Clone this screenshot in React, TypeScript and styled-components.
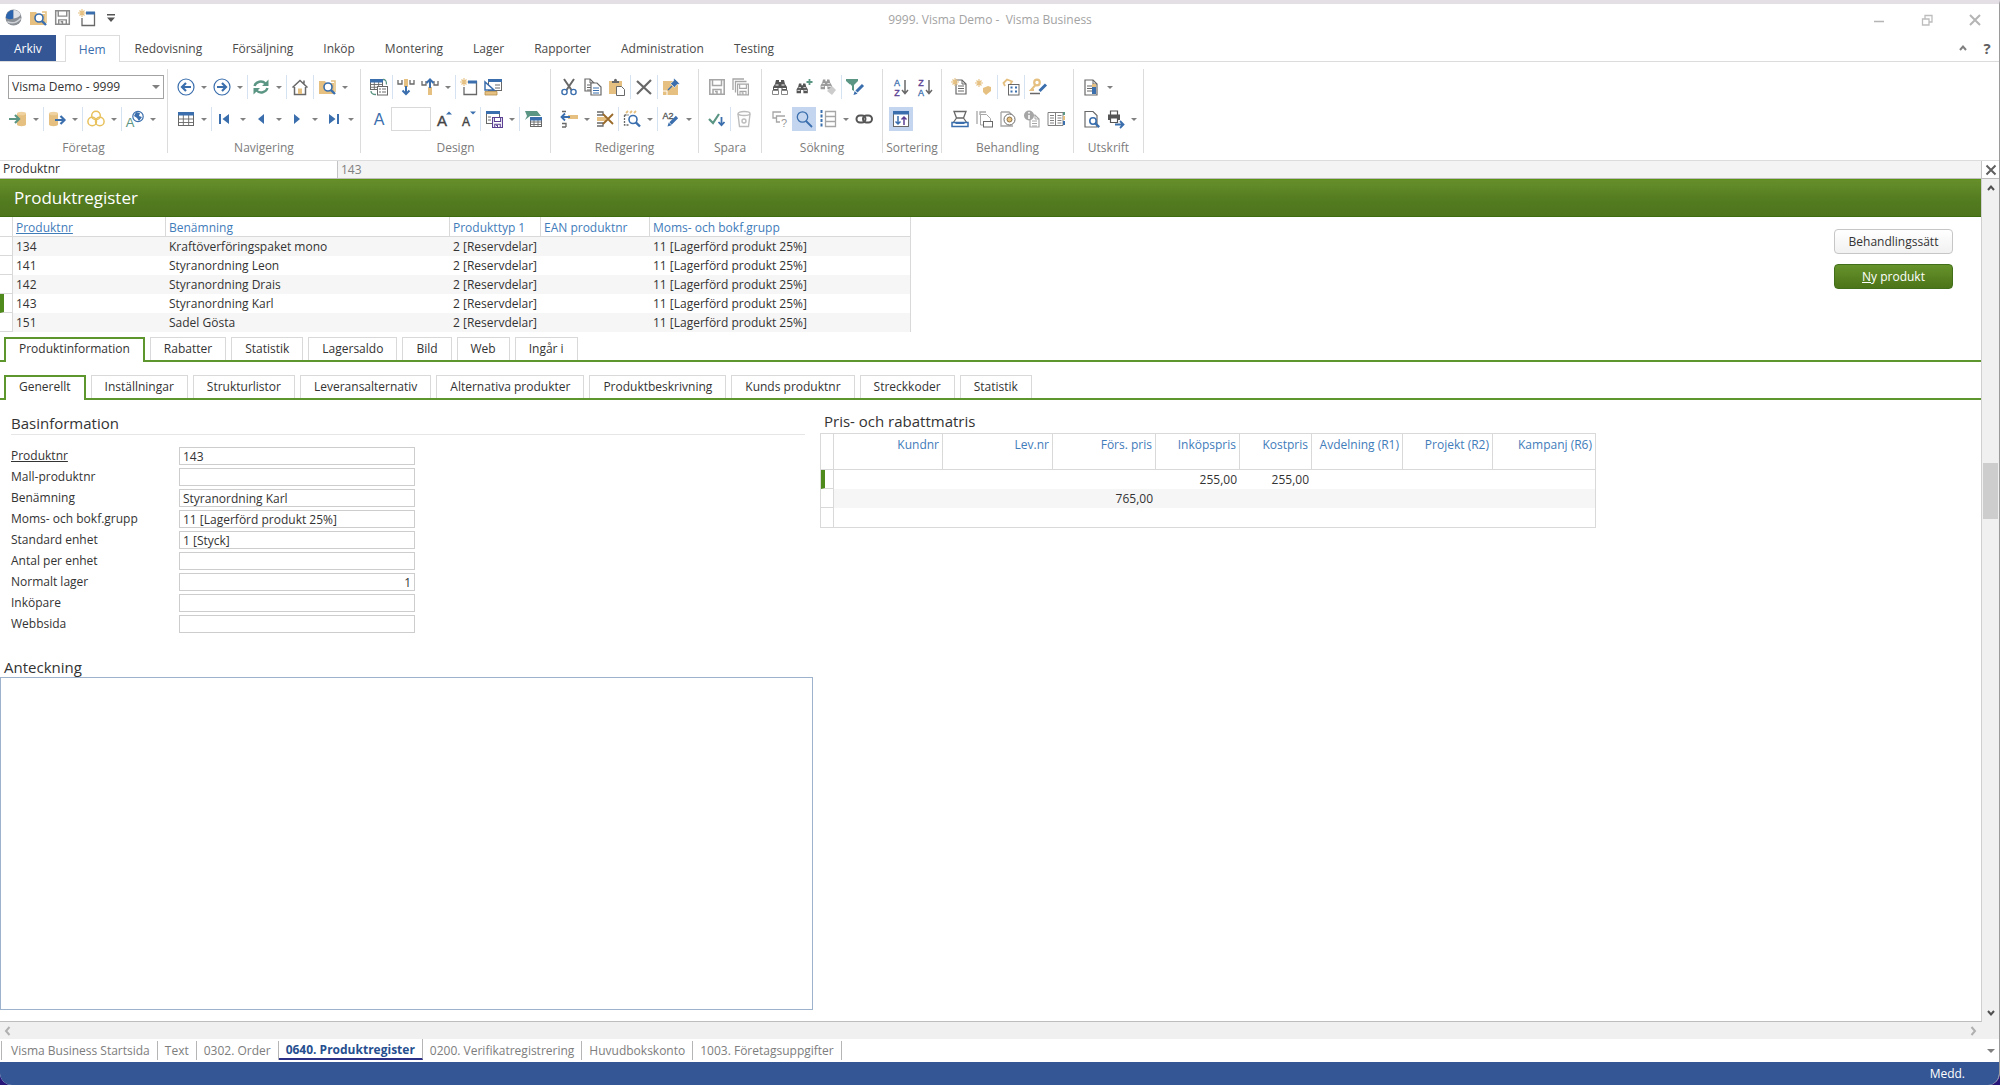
import React from "react";
import styled, { createGlobalStyle, css } from "styled-components";

const c = {
  blue: "#3a6ead",
  navy: "#345695",
  green: "#5b9583",
  tan: "#e5c080",
  gold: "#e8c15c",
  gray: "#686868",
  light: "#a6a6a6",
  purple: "#5a3f92",
  leaf: "#4f8a1c",
  line: "#d9d9d9",
};

const GlobalStyle = createGlobalStyle`
  *, *::before, *::after { box-sizing: border-box; }
  body { margin: 0; background: #27157a; }
  body, button, input, select, textarea, table {
    font-family: "Open Sans", "Noto Sans", sans-serif;
    font-size: 12px;
    line-height: 16px;
    color: #333;
  }
  button { margin: 0; padding: 0; border: 0; background: none; cursor: pointer; }
`;

/* ---------- icons ---------- */

const S = (p: React.SVGProps<SVGPathElement>) => <path fill="none" strokeWidth={1.3} {...p} />;
const Lens = ({ x = 10, y = 9, r = 4, fill = "#fff" }) => (
  <>
    <circle cx={x} cy={y} r={r} fill={fill} stroke={c.blue} strokeWidth={1.6} />
    <path d={`M${x + r * 0.7} ${y + r * 0.7}L${x + r + 3} ${y + r + 3}`} stroke={c.blue} strokeWidth={2.4} />
  </>
);
const Floppy = ({ x = 1, y = 1, s = 16, col = c.light, bg = "#fff" }) => (
  <g transform={`translate(${x} ${y}) scale(${s / 16})`}>
    <path d="M.8.8h14.4v14.4H.8z" fill={bg} stroke={col} strokeWidth={1.6} />
    <path d="M3.5 1v5.5h9V1M4 15v-4.5h8V15M6 12.5h2V15" fill="none" stroke={col} strokeWidth={1.5} />
  </g>
);
const Star = ({ x = 4, y = 4 }) => (
  <path
    d={`M${x - 4} ${y}h8M${x} ${y - 4}v8M${x - 2.5} ${y - 2.5}l5 5M${x + 2.5} ${y - 2.5}l-5 5`}
    stroke={c.tan}
    strokeWidth={1.1}
  />
);
const Page = ({ x = 3, y = 1, w = 11, h = 14, col = c.gray }) => (
  <>
    <path d={`M${x} ${y}h${w - 4}l4 4v${h - 4}H${x}z`} fill="#fff" stroke={col} strokeWidth={1.2} />
    <path d={`M${x + w - 4} ${y}v4h4`} fill="none" stroke={col} strokeWidth={1} />
    <path d={`M${x + 2} ${y + 6}h${w - 4}M${x + 2} ${y + 8.5}h${w - 4}M${x + 2} ${y + 11}h${w - 4}`} stroke={col} strokeWidth={1} />
  </>
);
const Binoculars = ({ col = "#555" }) => (
  <>
    <path d="M5 2h3v2h2V2h3l1 4 2 3v5H10.5V10h-3v4H2V9l2-3z" fill={col} />
    <path d="M4.5 7h3M10.5 7h3M3 10.5h3.5M11.5 10.5H15" stroke="#fff" strokeWidth={1} />
  </>
);
const Pencil = () => (
  <>
    <path d="M8.5 13.5L15 7" stroke={c.blue} strokeWidth={3.2} />
    <path d="M5.5 16.5l1.2-4 2.8 2.8z" fill={c.blue} />
  </>
);
const Cyl = ({ x = 7 }) => (
  <>
    <path d={`M${x} 3.5v11c0 2.3 9 2.3 9 0v-11z`} fill={c.tan} />
    <ellipse cx={x + 4.5} cy={3.5} rx={4.5} ry={1.8} fill="#efd29f" />
  </>
);
const Grid = ({ x = 1, y = 2, w = 16, h = 14 }) => (
  <>
    <rect x={x + 0.5} y={y + 0.5} width={w - 1} height={h - 1} fill="#fff" stroke={c.gray} />
    <path
      d={`M${x + w / 3} ${y}v${h}M${x + (w * 2) / 3} ${y}v${h}M${x} ${y + h * 0.5}h${w}M${x} ${y + h * 0.75}h${w}`}
      stroke={c.gray}
      strokeWidth={0.9}
    />
    <rect x={x} y={y} width={w} height={3.5} fill={c.blue} />
  </>
);
const Glyph = styled.text`
  font-family: "Liberation Sans", sans-serif;
  text-anchor: middle;
`;

const icons = {
  globe: (
    <>
      <circle cx="9" cy="9" r="8.5" fill="#8b8f96" />
      <path d="M1 9a8 8 0 0 1 8-8v9c-4 1.500-7 .5-8-1z" fill="#2c63ad" />
      <path d="M9 1c3.500 0 6.500 2 7.500 5-1 2-4 3.500-7.500 4z" fill="#dfe3e8" />
      <path d="M2.500 13.500c4.500 2 10 1 14-3.500" stroke="#d0d3d8" strokeWidth="1.500" fill="none" />
    </>
  ),
  folderSearch: (
    <>
      <path d="M1 3h6l1.500 2H16v11H1z" fill={c.tan} />
      <path d="M13 3h4v11" fill="none" stroke={c.tan} strokeWidth="1.500" />
      <Lens x={10} y={9} />
    </>
  ),
  save: <Floppy />,
  saveDark: <Floppy col="#8a8a8a" />,
  saveAll: (
    <>
      <S d="M1 12V1h11M3.500 14.500V3.500h11" stroke={c.light} />
      <Floppy x={5} y={5.5} s={12} />
    </>
  ),
  newWin: (
    <>
      <path d="M4 9v7.500h12.500V4H9" fill="none" stroke={c.gray} strokeWidth="1.300" />
      <path d="M8 2.500h9v3H8z" fill={c.blue} />
      <Star />
    </>
  ),
  back: (
    <>
      <circle cx="9" cy="9" r="8" fill="none" stroke={c.blue} strokeWidth="1.200" />
      <S d="M14 9H5M9 5L5 9l4 4" stroke={c.blue} strokeWidth={2.2} />
    </>
  ),
  forward: (
    <>
      <circle cx="9" cy="9" r="8" fill="none" stroke={c.blue} strokeWidth="1.200" />
      <S d="M4 9h9M9 5l4 4-4 4" stroke={c.blue} strokeWidth={2.2} />
    </>
  ),
  refresh: (
    <>
      <S d="M2.500 8A6.500 6 0 0 1 13.500 5.500M15.500 10A6.500 6 0 0 1 4.500 12.500" stroke={c.green} strokeWidth={2.4} />
      <path d="M16.500 1.500v6.500H10zM1.500 16.500V10H8z" fill={c.green} />
    </>
  ),
  home: (
    <>
      <S d="M1.500 9.500L9 2.500l7.500 7M3.500 9v7.500h11V9M13 5.500V2.500" stroke={c.gray} strokeWidth={1.5} />
      <rect x="7" y="10.500" width="4" height="5.500" fill={c.tan} />
    </>
  ),
  dbIn: (
    <>
      <Cyl x={8} />
      <S d="M0 9h9M6 5l4 4-4 4" stroke={c.green} strokeWidth={2.2} />
    </>
  ),
  dbOut: (
    <>
      <Cyl x={1} />
      <S d="M7 10h9M12.500 6l4 4-4 4" stroke={c.blue} strokeWidth={2.2} />
    </>
  ),
  rings: (
    <g fill="none" stroke={c.gold} strokeWidth="1.500">
      <circle cx="9" cy="5.500" r="4.300" />
      <circle cx="5.200" cy="11.500" r="4.300" />
      <circle cx="12.800" cy="11.500" r="4.300" />
    </g>
  ),
  globeA: (
    <>
      <circle cx="12" cy="6.500" r="5.200" fill="#fff" stroke={c.blue} strokeWidth="1.200" />
      <path d="M10 2l4 1-1 3 3 1-3 4-2-3-3-2z" fill={c.blue} />
      <Glyph x="4" y="17" fontSize="13" fill={c.green}>A</Glyph>
    </>
  ),
  table: <Grid />,
  first: <path d="M3 4h2v10H3zM13 4v10L6.500 9z" fill={c.blue} />,
  prev: <path d="M12 4v10L6 9z" fill={c.blue} />,
  next: <path d="M6 4v10l6-5z" fill={c.blue} />,
  last: <path d="M13 4h2v10h-2zM5 4v10l6.500-5z" fill={c.blue} />,
  tableSwap: (
    <>
      <Grid x={0} y={1} w={13} h={11} />
      <rect x="7.500" y="8.500" width="10" height="8.500" fill="#fff" stroke={c.gray} />
      <path d="M9 11h2M12 11h4M9 14h2M12 14h4" stroke={c.gray} />
      <S d="M13 1.500c3 0 3.500 1.500 3.500 5M1 13c0 3 2 3.500 5 3.500" stroke={c.green} />
    </>
  ),
  moveDown: (
    <>
      <S d="M1 2v4h4V2M13 2v4h4V2" stroke={c.gray} />
      <path d="M7 1h4v8H7z" fill={c.tan} />
      <S d="M9 8v8M5.500 12.500L9 16l3.500-3.500" stroke={c.blue} strokeWidth={2} />
    </>
  ),
  moveUp: (
    <>
      <S d="M1 3v4h4V3M13 3v4h4V3" stroke={c.gray} />
      <path d="M7 9h4v8H7z" fill={c.tan} />
      <S d="M9 10V2M5.500 5L9 1.500 12.500 5" stroke={c.blue} strokeWidth={2} />
    </>
  ),
  designWin: (
    <>
      <rect x="4.500" y="1.500" width="13" height="11" fill="#fff" stroke={c.gray} />
      <path d="M4 1h14v3H4z" fill={c.blue} />
      <path d="M11 7h5M11 10h5" stroke={c.gray} />
      <path d="M1 4v8h9z" fill="#fff" stroke={c.blue} strokeWidth="1.500" />
      <path d="M1 13.500h12V17H1z" fill={c.tan} stroke="#b58f4d" strokeWidth=".8" />
    </>
  ),
  fontA: <Glyph x="9" y="15" fontSize="16" fill={c.blue}>A</Glyph>,
  fontUp: (
    <>
      <Glyph x="8" y="16" fontSize="15" fill="#444" stroke="#444" strokeWidth=".4">A</Glyph>
      <path d="M12 4.500L15 1.500l3 3z" fill={c.blue} />
    </>
  ),
  fontDown: (
    <>
      <Glyph x="8" y="16" fontSize="12" fill="#444" stroke="#444" strokeWidth=".4">A</Glyph>
      <path d="M12 1.500l3 3 3-3z" fill={c.blue} />
    </>
  ),
  saveLayout: (
    <>
      <rect x="1.500" y="1.500" width="13" height="12" fill="#fff" stroke={c.gray} />
      <path d="M1 1h14v3H1z" fill={c.blue} />
      <path d="M3 7h3M3 10h3" stroke={c.gray} />
      <Floppy x={7} y={7} s={11} col={c.purple} />
    </>
  ),
  flagTable: (
    <>
      <path d="M1 1h12l4 5H6L1 10l2-4z" fill={c.green} />
      <Grid x={6} y={7} w={12} h={10} />
    </>
  ),
  cut: (
    <>
      <S d="M4 1l7.500 11M14 1L6.500 12" stroke={c.gray} strokeWidth={2} />
      <circle cx="4.500" cy="14" r="2.600" fill="none" stroke={c.blue} strokeWidth="1.400" />
      <circle cx="13.500" cy="14" r="2.600" fill="none" stroke={c.blue} strokeWidth="1.400" />
    </>
  ),
  copy: (
    <>
      <Page x={1} y={1} w={9} h={12} />
      <path d="M7 5h6l4 4v8H7z" fill="#fff" stroke={c.gray} strokeWidth="1.200" />
      <path d="M9 10h6M9 12.500h6M9 15h6" stroke={c.blue} />
    </>
  ),
  paste: (
    <>
      <path d="M1 3h13v13H1z" fill={c.tan} />
      <path d="M4 5V3h2c0-3 3-3 3 0h2v2z" fill={c.gray} />
      <path d="M8.500 8.500h5l3 3v6h-8z" fill="#fff" stroke={c.gray} />
    </>
  ),
  del: <S d="M2 3l14 13M16 2L2 16" stroke={c.gray} strokeWidth={2.2} />,
  pin: (
    <>
      <path d="M1 3h15v14H1z" fill={c.tan} />
      <path d="M5 17v-4H1" fill="none" stroke="#fff" />
      <path d="M12 0l6 6-3 .5-2.500 3-4-4 3-2.500z" fill={c.blue} stroke="#fff" strokeWidth=".6" />
      <S d="M10 8l-4 4" stroke={c.blue} />
    </>
  ),
  insertRow: (
    <>
      <path d="M8 5h10v4H8z" fill={c.tan} />
      <S d="M10 7H2M5 3.500L1.500 7 5 10.500" stroke={c.blue} strokeWidth={1.8} />
      <S d="M2 1.500h4M2 13.500h4v3.500M2 17h4" stroke={c.gray} />
    </>
  ),
  deleteRow: (
    <>
      <S d="M1 2h6v3H1M1 13h6v3H1" stroke={c.gray} />
      <path d="M1 7h9v4H1z" fill={c.tan} />
      <S d="M7 4l10 10M17 4L7 14" stroke="#9a6a2a" strokeWidth={1.8} />
    </>
  ),
  replace: (
    <>
      <S d="M3 3l2-2M7 3l2-2M11 3l2-2" stroke={c.tan} strokeWidth={1.8} />
      <S d="M1.500 5h4M1.500 5v10h4" stroke={c.gray} strokeDasharray="2 1" />
      <Lens x={10} y={9.5} r={4} />
    </>
  ),
  editText: (
    <>
      <Glyph x="6" y="9" fontSize="9" fill="#555" stroke="#555" strokeWidth=".3">A2</Glyph>
      <Pencil />
    </>
  ),
  confirm: (
    <>
      <S d="M1 9l4 4 6-9" stroke={c.green} strokeWidth={2.2} />
      <S d="M13.500 7v8M10.500 12l3 3.200 3-3.200" stroke={c.blue} strokeWidth={1.8} />
    </>
  ),
  trash: (
    <g fill="none" stroke="#bcbcbc" strokeWidth="1.400">
      <ellipse cx="9" cy="3.500" rx="6" ry="2" />
      <path d="M3 4l1.500 12.500h9L15 4" />
      <circle cx="9" cy="11" r="2" />
    </g>
  ),
  find: (
    <>
      <Binoculars />
      <path d="M1.500 12.500h6v4h-6zM10.500 12.500h6v4h-6z" fill="#fff" stroke="#888" />
    </>
  ),
  findAdd: (
    <>
      <g transform="translate(0 4) scale(.8)">
        <Binoculars />
      </g>
      <S d="M14.500 1v6M11.500 4h6" stroke={c.green} strokeWidth={1.8} />
    </>
  ),
  findClear: (
    <>
      <g transform="scale(.8)">
        <Binoculars col="#999" />
      </g>
      <path d="M8 13l5-5 4 4-4 5z" fill="#ccc" />
    </>
  ),
  filterEdit: (
    <>
      <path d="M0 1h12v2L8 7v6l-3.500-2V7L0 3z" fill={c.green} />
      <path d="M4 6l2 2v5l-2-1z" fill="#fff" />
      <path d="M10.500 13.500L17 7" stroke={c.blue} strokeWidth="3" />
      <path d="M7.500 17l1.200-4 2.800 2.800z" fill={c.blue} />
    </>
  ),
  unknown: (
    <>
      <S d="M10 2H2v6h3M14 6H5.500v6H9" stroke={c.light} />
      <Glyph x="13" y="17" fontSize="11" fill="#999">?</Glyph>
    </>
  ),
  search: (
    <>
      <circle cx="7.500" cy="7" r="5.200" fill="none" stroke={c.blue} strokeWidth="1.300" />
      <S d="M11 11l6 6" stroke={c.blue} strokeWidth={1.8} />
    </>
  ),
  numList: (
    <>
      <S d="M2.500 0v18" stroke={c.blue} strokeWidth={2} strokeDasharray="3 1.500" />
      <S d="M6.500 1.500h10v15h-10zM6.500 6.500h10M6.500 11.500h10" stroke={c.light} />
    </>
  ),
  link: (
    <g fill="none" stroke="#555" strokeWidth="2">
      <rect x="1.500" y="5.500" width="9" height="7" rx="3.500" />
      <rect x="8" y="5.500" width="9" height="7" rx="3.500" />
    </g>
  ),
  sortAz: (
    <>
      <Glyph x="5" y="7.500" fontSize="9" fill={c.blue} stroke={c.blue} strokeWidth=".3">A</Glyph>
      <Glyph x="5" y="18" fontSize="9" fill={c.purple} stroke={c.purple} strokeWidth=".3">Z</Glyph>
      <S d="M13 2v13M10 12l3 3.500 3-3.500" stroke={c.gray} strokeWidth={1.5} />
    </>
  ),
  sortZa: (
    <>
      <Glyph x="5" y="7.500" fontSize="9" fill={c.purple} stroke={c.purple} strokeWidth=".3">Z</Glyph>
      <Glyph x="5" y="18" fontSize="9" fill={c.blue} stroke={c.blue} strokeWidth=".3">A</Glyph>
      <S d="M13 2v13M10 12l3 3.500 3-3.500" stroke={c.gray} strokeWidth={1.5} />
    </>
  ),
  sortPanel: (
    <>
      <rect x="1.500" y="1.500" width="15" height="15" fill="#fff" stroke={c.gray} />
      <path d="M1 1h16v3.500H1z" fill={c.blue} />
      <S d="M6 6v8M3.500 11.500L6 14l2.500-2.500" stroke={c.blue} strokeWidth={1.5} />
      <S d="M12 15V7M9.500 9.500L12 7l2.500 2.500" stroke={c.purple} strokeWidth={1.5} />
    </>
  ),
  newDoc: (
    <>
      <Page x={5} y={2} w={10} h={14} />
      <Star x={4} y={4} />
    </>
  ),
  newTag: (
    <>
      <Star x={4} y={5} />
      <path d="M8 10l5-2 3 1v4l-5 4-3-3z" fill={c.tan} />
    </>
  ),
  tagList: (
    <>
      <S d="M3 8L1.500 5 5 1.500l5 2-3 5" stroke={c.tan} strokeWidth={1.8} />
      <rect x="6.500" y="6.500" width="10.500" height="10.500" fill="#fff" stroke={c.gray} />
      <path d="M8.500 9.500h2M13 9.500h2M8.500 13.500h2M13 13.500h2" stroke={c.blue} strokeWidth="2" />
    </>
  ),
  keyEdit: (
    <>
      <circle cx="8" cy="4.500" r="2.800" fill="none" stroke={c.tan} strokeWidth="2.200" />
      <S d="M6.500 7L2 12h3" stroke={c.tan} strokeWidth={2} />
      <path d="M10.500 13l6.500-6.500" stroke={c.blue} strokeWidth="3" />
      <path d="M1 15.500h10" stroke={c.gray} strokeWidth="1.500" />
    </>
  ),
  scan: (
    <>
      <S d="M3 1.500h12l-2.500 6.500h-7zM5.500 8L2 13M12.500 8l3.500 5" stroke={c.gray} />
      <path d="M1 12.500h16v4H1z" fill="#fff" stroke={c.blue} strokeWidth="1.500" />
      <path d="M4.500 12.500h9v1.500h-9z" fill={c.blue} />
    </>
  ),
  docMail: (
    <>
      <S d="M2 1v13M5 5V2h6" stroke={c.light} />
      <path d="M5.500 4.500h6l4 4V12M5.500 4.500V15H8" fill="none" stroke={c.light} />
      <rect x="8.500" y="11.500" width="9" height="5.500" fill="#fff" stroke={c.gray} />
    </>
  ),
  docView: (
    <>
      <path d="M2 2h8l3 3M2 2v14h12" fill="none" stroke={c.light} strokeWidth="1.300" />
      <circle cx="10.500" cy="9.500" r="5.500" fill="#fff" stroke={c.gray} />
      <circle cx="10.500" cy="9.500" r="2.500" fill={c.tan} stroke="#8f7447" />
    </>
  ),
  docInfo: (
    <>
      <Page x={7} y={5} w={9} h={12} col={c.light} />
      <circle cx="6" cy="5.500" r="5" fill={c.light} />
      <path d="M6 2v1.500M6 5v4" stroke="#fff" strokeWidth="1.600" />
    </>
  ),
  ledger: (
    <>
      <S
        d="M1 2.500h15v13H1zM8.500 2.500v13M3 5.500h4M3 8h4M3 10.500h4M3 13h4M10.500 5.500h4M10.500 8h4M10.500 10.500h4M10.500 13h4"
        stroke="#808080"
        strokeWidth={1}
      />
      <path d="M16 2h2v3h-2z" fill={c.green} />
      <path d="M16 6h2v4h-2z" fill={c.tan} />
      <path d="M16 11h2v4h-2z" fill={c.blue} />
    </>
  ),
  report: (
    <>
      <Page x={2} y={2} w={12} h={15} />
      <path d="M9 8h4v8H9z" fill={c.blue} />
      <path d="M9 6h4v3H9z" fill={c.tan} />
    </>
  ),
  preview: (
    <>
      <path d="M2 1.500h8l4 4V17H2z" fill="#fff" stroke={c.gray} strokeWidth="1.200" />
      <Lens x={10} y={11} r={3.2} />
    </>
  ),
  print: (
    <>
      <path d="M1 4.500h12V10H1z" fill="#555" />
      <path d="M3.500 1h7v4h-7zM3.500 8h7v4.500h-7z" fill="#fff" stroke="#555" strokeWidth="1.200" />
      <S d="M8 14.500h8M13 11l3.500 3.500L13 18" stroke={c.blue} strokeWidth={1.8} />
    </>
  ),
};
type IconName = keyof typeof icons;

const Svg = styled.svg<{ $size: number }>`
  display: block;
  flex: none;
  width: ${(p) => p.$size}px;
  height: ${(p) => p.$size}px;
  overflow: visible;
`;
const Icon = ({ name, size = 18 }: { name: IconName; size?: number }) => (
  <Svg viewBox="0 0 18 18" $size={size} aria-hidden="true">
    {icons[name]}
  </Svg>
);

type Dir = "up" | "down" | "left" | "right";
const chevrons: Record<Dir, string> = {
  up: "M2 7l3-3.500L8 7",
  down: "M2 3l3 3.500L8 3",
  left: "M6.500 1L3 5l3.500 4",
  right: "M3.500 1L7 5 3.500 9",
};
const Chevron = ({ dir, color = "#505050" }: { dir: Dir; color?: string }) => (
  <Svg viewBox="0 0 10 10" $size={10} aria-hidden="true">
    <path d={chevrons[dir]} fill="none" stroke={color} strokeWidth="2" />
  </Svg>
);
const Triangle = styled.span<{ $size?: number }>`
  border: ${(p) => p.$size ?? 3}px solid transparent;
  border-top-color: #808080;
  border-bottom-width: 0;
`;

/* ---------- window frame ---------- */

const Window = styled.div`
  display: flex;
  flex-direction: column;
  min-height: 100vh;
  overflow: hidden;
  background: #fff;
  border-top: 4px solid #e4dfe5;
  border-right: 1px solid #9a9a9a;
  border-radius: 0 0 12px 12px;
`;
const TitleBar = styled.header`
  display: grid;
  grid-template-columns: 1fr auto 1fr;
  align-items: center;
  height: 31px;
  padding: 0 12px 0 5px;
`;
const QuickAccess = styled.div`
  display: flex;
  align-items: center;
  gap: 7px;
  padding-bottom: 4px;
`;
const AppTitle = styled.h1`
  margin: 0;
  padding-right: 12px;
  font-size: 12px;
  font-weight: 400;
  color: #a3a3a3;
`;
const WindowButtons = styled.div`
  display: flex;
  justify-content: flex-end;
  gap: 24px;
`;
const SmallButton = styled.button`
  display: flex;
  align-items: center;
  justify-content: center;
  min-width: 16px;
  height: 18px;
`;
const WindowButton = styled(SmallButton)`
  width: 24px;
`;

/* ---------- ribbon ---------- */

const RibbonTabs = styled.nav`
  display: flex;
  align-items: flex-end;
  height: 27px;
  border-bottom: 1px solid #dcdcdc;
`;
const RibbonTab = styled.button<{ $kind?: "file" | "active" }>`
  height: 26px;
  padding: 2px 15px 0;
  color: #4a4a4a;
  ${(p) =>
    p.$kind === "file" &&
    css`
      margin-right: 9px;
      padding: 2px 14px 0;
      background: ${c.navy};
      color: #fff;
    `}
  ${(p) =>
    p.$kind === "active" &&
    css`
      height: 27px;
      margin-bottom: -1px;
      padding: 1px 13px 0;
      border: 1px solid #dcdcdc;
      border-bottom: 0;
      background: #fff;
      color: ${c.blue};
    `}
`;
const RibbonTools = styled.div`
  display: flex;
  align-self: center;
  gap: 8px;
  margin-left: auto;
  padding-right: 4px;
`;
const HelpMark = styled.span`
  font-size: 15px;
  font-weight: 700;
  color: #606060;
`;
const Ribbon = styled.div`
  display: flex;
  padding: 7px 0;
  border-bottom: 1px solid #dcdcdc;
`;
const Group = styled.section<{ $width: number }>`
  display: flex;
  flex-direction: column;
  gap: 8px;
  flex: none;
  width: ${(p) => p.$width}px;
  height: 84px;
  padding: 6px 0 0 6px;
  border-right: 1px solid #dcdcdc;
`;
const ToolRow = styled.div`
  display: flex;
  align-items: center;
  height: 24px;
`;
const GroupLabel = styled.h2`
  margin: 0 0 0 -6px;
  padding-top: 1px;
  font-size: 12px;
  font-weight: 400;
  line-height: 16px;
  text-align: center;
  color: #7c7c7c;
  white-space: nowrap;
`;
const ToolButton = styled.button<{ $on?: boolean }>`
  display: flex;
  align-items: center;
  justify-content: center;
  flex: none;
  width: 24px;
  height: 24px;
  background: ${(p) => (p.$on ? "#c4d6ef" : "none")};
`;
const CaretButton = styled.button`
  display: flex;
  align-items: center;
  justify-content: center;
  flex: none;
  width: 12px;
  height: 24px;
`;
const Divider = styled.span`
  flex: none;
  width: 1px;
  height: 24px;
  margin: 0 1px;
  background: #d5e2f1;
`;
const Picker = styled.div`
  position: relative;
  width: 156px;
  margin-left: 2px;
  & > span {
    position: absolute;
    top: 10px;
    right: 4px;
    pointer-events: none;
  }
`;
const CompanySelect = styled.select`
  appearance: none;
  display: block;
  width: 100%;
  height: 24px;
  padding: 0 16px 0 3px;
  border: 1px solid #a3a3a3;
  border-radius: 0;
  background: #fff;
`;
const FontBox = styled.input`
  width: 40px;
  height: 24px;
  border: 1px solid ${c.line};
`;

const Tool = ({ icon, label, menu, on }: { icon: IconName; label: string; menu?: boolean; on?: boolean }) => (
  <>
    <ToolButton aria-label={label} aria-pressed={on} $on={on}>
      <Icon name={icon} />
    </ToolButton>
    {menu && (
      <CaretButton aria-label={`${label}, meny`}>
        <Triangle />
      </CaretButton>
    )}
  </>
);

/* ---------- work area ---------- */

const FilterBar = styled.div`
  display: flex;
  height: 18px;
  border-bottom: 1px solid #bdbdbd;
  background: #f4f4f4;
`;
const FilterLabel = styled.label`
  width: 338px;
  padding-left: 3px;
  border-right: 1px solid #c4c4c4;
  background: #fff;
`;
const FilterInput = styled.input`
  flex: 1;
  min-width: 0;
  padding: 0 3px;
  border: 0;
  background: none;
  color: #808080;
`;
const FilterClose = styled(SmallButton)`
  width: 18px;
  height: 17px;
  border-left: 1px solid #c4c4c4;
  background: #fff;
`;
const WorkArea = styled.div`
  display: flex;
  flex: 1;
`;
const Sheet = styled.main`
  display: flex;
  flex-direction: column;
  flex: 1;
  min-width: 0;
  border-right: 1px solid #cfcfcf;
  border-bottom: 1px solid #bdbdbd;
`;
const Banner = styled.h2`
  margin: 0;
  padding-left: 14px;
  border-top: 1px solid #5b9414;
  border-bottom: 1px solid #3d6b10;
  background: linear-gradient(#668f2b, #527a1f 60%, #4f751c);
  font-size: 17px;
  font-weight: 400;
  line-height: 36px;
  color: #fff;
`;
const Overview = styled.div`
  display: flex;
  align-items: flex-start;
  justify-content: space-between;
  padding-right: 28px;
`;
const Actions = styled.div`
  display: flex;
  flex-direction: column;
  gap: 10px;
  padding-top: 12px;
`;
const ActionButton = styled.button<{ $primary?: boolean }>`
  width: 119px;
  height: 25px;
  border: 1px solid ${(p) => (p.$primary ? "#42701a" : "#c6c6c6")};
  border-radius: 4px;
  background: ${(p) => (p.$primary ? "linear-gradient(#66932b, #4c7419)" : "linear-gradient(#fff, #f1f1f1)")};
  color: ${(p) => (p.$primary ? "#fff" : "#333")};
`;

const DataTable = styled.table<{ $framed?: boolean }>`
  flex: none;
  table-layout: fixed;
  border-collapse: separate;
  border-spacing: 0;
  border: 0 solid ${c.line};
  border-width: ${(p) => (p.$framed ? "1px" : "0 1px 0 0")};
  width: ${(p) => (p.$framed ? "776px" : "911px")};
  th,
  td {
    padding: 0 3px;
    overflow: hidden;
    font-weight: 400;
    text-align: left;
    white-space: nowrap;
  }
  th {
    height: ${(p) => (p.$framed ? "36px" : "20px")};
    padding-top: 3px;
    border-bottom: 1px solid ${c.line};
    border-right: 1px solid ${c.line};
    vertical-align: top;
    color: #3f7cba;
  }
  th:last-child {
    border-right: 0;
  }
  td {
    height: 19px;
  }
  tbody tr:nth-child(${(p) => (p.$framed ? "even" : "odd")}) td {
    background: #f6f6f6;
  }
  tbody tr td:first-child {
    border-right: 1px solid ${c.line};
    border-bottom: 1px solid ${c.line};
    background: #fff;
  }
  tbody tr[aria-selected="true"] td:first-child {
    border-left: 4px solid ${c.leaf};
  }
  ${(p) =>
    p.$framed &&
    css`
      && th,
      && td {
        text-align: right;
      }
      tbody tr:last-child td {
        border-bottom: 0;
      }
    `}
`;
const KeyName = styled.span`
  text-decoration: underline;
`;

const TabStrip = styled.div<{ $gap: number }>`
  display: flex;
  gap: 5px;
  height: 25px;
  margin-top: ${(p) => p.$gap}px;
  padding-left: 4px;
  border-bottom: 2px solid #5c962c;
`;
const Tab = styled.button<{ $active?: boolean }>`
  height: 23px;
  padding: 0 13px;
  border: 1px solid ${c.line};
  border-bottom: 0;
  background: #fff;
  ${(p) =>
    p.$active &&
    css`
      height: 25px;
      padding: 0 13px 3px;
      border: 2px solid #5c962c;
      border-bottom: 0;
    `}
`;

const Panels = styled.div`
  display: grid;
  grid-template-columns: 813fr 1168fr;
  flex: 1;
`;
const LeftPanel = styled.div`
  display: flex;
  flex-direction: column;
  padding: 13px 0 11px;
`;
const RightPanel = styled.div`
  padding: 11px 0 0 7px;
`;
const Heading = styled.h3`
  margin: 0;
  font-size: 15px;
  font-weight: 400;
  line-height: 20px;
`;
const FormHeading = styled(Heading)`
  margin: 0 8px 0 11px;
  padding-bottom: 1px;
  border-bottom: 1px solid #e6e6e6;
`;
const MatrixHeading = styled(Heading)`
  padding: 0 0 2px 4px;
`;
const Form = styled.form`
  display: flex;
  flex-direction: column;
  gap: 3px;
  padding: 12px 0 0 11px;
`;
const Field = styled.div`
  display: grid;
  grid-template-columns: 168px 236px;
  align-items: center;
`;
const FieldInput = styled.input`
  height: 18px;
  padding: 0 3px;
  border: 1px solid #cdcdcd;
`;
const NoteLabel = styled.label`
  margin-top: 24px;
  padding-left: 4px;
  font-size: 15px;
  line-height: 20px;
`;
const Note = styled.textarea`
  flex: 1;
  width: 100%;
  border: 1px solid #9db2cc;
  resize: none;
`;

/* ---------- scrollbars and footer ---------- */

const VScroll = styled.div`
  display: flex;
  flex-direction: column;
  width: 17px;
  background: #f0f0f0;
`;
const Space = styled.div<{ $grow: number }>`
  flex: ${(p) => p.$grow};
`;
const Thumb = styled(Space)`
  margin: 0 1px;
  background: #cdcdcd;
`;
const HScroll = styled.div`
  display: flex;
  justify-content: space-between;
  height: 17px;
  padding-right: 18px;
  background: #f0f0f0;
`;
const Documents = styled.nav`
  display: flex;
  align-items: center;
  height: 23px;
  padding-left: 1px;
`;
const DocumentTab = styled.button<{ $active?: boolean }>`
  height: 19px;
  padding: 0 7px;
  border-right: 1px solid #b5b5b5;
  color: #7d7d7d;
  &:first-child {
    padding-left: 9px;
    border-left: 1px solid #b5b5b5;
  }
  ${(p) =>
    p.$active &&
    css`
      align-self: stretch;
      height: auto;
      margin-bottom: 2px;
      padding-top: 3px;
      border-bottom: 2px solid #2b2f86;
      font-weight: 700;
      color: #264f8f;
    `}
`;
const MoreDocuments = styled(SmallButton)`
  margin-left: auto;
`;
const StatusBar = styled.footer`
  padding: 0 34px 0;
  background: ${c.navy};
  font-size: 12px;
  line-height: 23px;
  text-align: right;
  color: #fff;
`;

const ribbonTabs = ["Redovisning", "Försäljning", "Inköp", "Montering", "Lager", "Rapporter", "Administration", "Testing"];
const products = [
  ["134", "Kraftöverföringspaket mono"],
  ["141", "Styranordning Leon"],
  ["142", "Styranordning Drais"],
  ["143", "Styranordning Karl"],
  ["151", "Sadel Gösta"],
];
const mainTabs = ["Produktinformation", "Rabatter", "Statistik", "Lagersaldo", "Bild", "Web", "Ingår i"];
const subTabs = [
  "Generellt",
  "Inställningar",
  "Strukturlistor",
  "Leveransalternativ",
  "Alternativa produkter",
  "Produktbeskrivning",
  "Kunds produktnr",
  "Streckkoder",
  "Statistik",
];
const fields = [
  ["Produktnr", "143"],
  ["Mall-produktnr", ""],
  ["Benämning", "Styranordning Karl"],
  ["Moms- och bokf.grupp", "11 [Lagerförd produkt 25%]"],
  ["Standard enhet", "1 [Styck]"],
  ["Antal per enhet", ""],
  ["Normalt lager", "1"],
  ["Inköpare", ""],
  ["Webbsida", ""],
];
const priceColumns = ["Kundnr", "Lev.nr", "Förs. pris", "Inköpspris", "Kostpris", "Avdelning (R1)", "Projekt (R2)", "Kampanj (R6)"];
const priceRows = [
  ["", "", "", "255,00", "255,00", "", "", ""],
  ["", "", "765,00", "", "", "", "", ""],
  ["", "", "", "", "", "", "", ""],
];
const documents = [
  "Visma Business Startsida",
  "Text",
  "0302. Order",
  "0640. Produktregister",
  "0200. Verifikatregistrering",
  "Huvudbokskonto",
  "1003. Företagsuppgifter",
];

const Columns = ({ widths }: { widths: number[] }) => (
  <colgroup>
    {widths.map((w, i) => (
      <col key={i} width={w} />
    ))}
  </colgroup>
);

const Tabs = ({ names, gap, label }: { names: string[]; gap: number; label: string }) => (
  <TabStrip role="tablist" aria-label={label} $gap={gap}>
    {names.map((name, i) => (
      <Tab key={name} role="tab" aria-selected={i === 0} $active={i === 0}>
        {name}
      </Tab>
    ))}
  </TabStrip>
);

const RibbonGroups = () => (
  <Ribbon>
    <Group $width={168}>
      <ToolRow>
        <Picker>
          <CompanySelect aria-label="Företag" defaultValue="9999">
            <option value="9999">Visma Demo - 9999</option>
          </CompanySelect>
          <Triangle $size={4} />
        </Picker>
      </ToolRow>
      <ToolRow>
        <Tool icon="dbIn" label="Logga in" menu />
        <Divider />
        <Tool icon="dbOut" label="Logga ut" menu />
        <Divider />
        <Tool icon="rings" label="Roller" menu />
        <Divider />
        <Tool icon="globeA" label="Språk" menu />
      </ToolRow>
      <GroupLabel>Företag</GroupLabel>
    </Group>
    <Group $width={193}>
      <ToolRow>
        <Tool icon="back" label="Bakåt" menu />
        <Tool icon="forward" label="Framåt" menu />
        <Divider />
        <Tool icon="refresh" label="Uppdatera" menu />
        <Divider />
        <Tool icon="home" label="Startsida" />
        <Divider />
        <Tool icon="folderSearch" label="Öppna" menu />
      </ToolRow>
      <ToolRow>
        <Tool icon="table" label="Tabell" menu />
        <Divider />
        <Tool icon="first" label="Första" menu />
        <Tool icon="prev" label="Föregående" menu />
        <Tool icon="next" label="Nästa" menu />
        <Tool icon="last" label="Sista" menu />
      </ToolRow>
      <GroupLabel>Navigering</GroupLabel>
    </Group>
    <Group $width={190}>
      <ToolRow>
        <Tool icon="tableSwap" label="Växla vy" />
        <Divider />
        <Tool icon="moveDown" label="Flytta ner" />
        <Tool icon="moveUp" label="Flytta upp" menu />
        <Divider />
        <Tool icon="newWin" label="Nytt fönster" />
        <Tool icon="designWin" label="Formge" />
      </ToolRow>
      <ToolRow>
        <Tool icon="fontA" label="Teckensnitt" />
        <FontBox aria-label="Storlek" />
        <Tool icon="fontUp" label="Större text" />
        <Tool icon="fontDown" label="Mindre text" />
        <Divider />
        <Tool icon="saveLayout" label="Spara layout" menu />
        <Divider />
        <Tool icon="flagTable" label="Layout" />
      </ToolRow>
      <GroupLabel>Design</GroupLabel>
    </Group>
    <Group $width={148}>
      <ToolRow>
        <Tool icon="cut" label="Klipp ut" />
        <Tool icon="copy" label="Kopiera" />
        <Tool icon="paste" label="Klistra in" />
        <Divider />
        <Tool icon="del" label="Ta bort" />
        <Divider />
        <Tool icon="pin" label="Fäst" />
      </ToolRow>
      <ToolRow>
        <Tool icon="insertRow" label="Infoga rad" menu />
        <Tool icon="deleteRow" label="Ta bort rad" />
        <Divider />
        <Tool icon="replace" label="Ersätt" menu />
        <Divider />
        <Tool icon="editText" label="Ändra text" menu />
      </ToolRow>
      <GroupLabel>Redigering</GroupLabel>
    </Group>
    <Group $width={63}>
      <ToolRow>
        <Tool icon="save" label="Spara" />
        <Tool icon="saveAll" label="Spara alla" />
      </ToolRow>
      <ToolRow>
        <Tool icon="confirm" label="Bekräfta" />
        <Divider />
        <Tool icon="trash" label="Kasta" />
      </ToolRow>
      <GroupLabel>Spara</GroupLabel>
    </Group>
    <Group $width={121}>
      <ToolRow>
        <Tool icon="find" label="Sök" />
        <Tool icon="findAdd" label="Utöka sökning" />
        <Tool icon="findClear" label="Rensa sökning" />
        <Divider />
        <Tool icon="filterEdit" label="Filter" />
      </ToolRow>
      <ToolRow>
        <Tool icon="unknown" label="Frågor" />
        <Tool icon="search" label="Sökfält" on />
        <Tool icon="numList" label="Lista" menu />
        <Tool icon="link" label="Länk" />
      </ToolRow>
      <GroupLabel>Sökning</GroupLabel>
    </Group>
    <Group $width={59}>
      <ToolRow>
        <Tool icon="sortAz" label="Stigande" />
        <Tool icon="sortZa" label="Fallande" />
      </ToolRow>
      <ToolRow>
        <Tool icon="sortPanel" label="Sorteringsfält" on />
      </ToolRow>
      <GroupLabel>Sortering</GroupLabel>
    </Group>
    <Group $width={132}>
      <ToolRow>
        <Tool icon="newDoc" label="Nytt dokument" />
        <Tool icon="newTag" label="Ny etikett" />
        <Divider />
        <Tool icon="tagList" label="Etiketter" />
        <Divider />
        <Tool icon="keyEdit" label="Nycklar" />
      </ToolRow>
      <ToolRow>
        <Tool icon="scan" label="Skanna" />
        <Tool icon="docMail" label="Skicka" />
        <Tool icon="docView" label="Visa dokument" />
        <Tool icon="docInfo" label="Dokumentinfo" />
        <Tool icon="ledger" label="Journal" />
      </ToolRow>
      <GroupLabel>Behandling</GroupLabel>
    </Group>
    <Group $width={70}>
      <ToolRow>
        <Tool icon="report" label="Rapport" menu />
      </ToolRow>
      <ToolRow>
        <Tool icon="preview" label="Förhandsgranska" />
        <Tool icon="print" label="Skriv ut" menu />
      </ToolRow>
      <GroupLabel>Utskrift</GroupLabel>
    </Group>
  </Ribbon>
);

export default function App() {
  return (
    <>
      <GlobalStyle />
      <Window>
        <TitleBar>
          <QuickAccess>
            <SmallButton aria-label="Program"><Icon name="globe" size={17} /></SmallButton>
            <SmallButton aria-label="Öppna"><Icon name="folderSearch" size={18} /></SmallButton>
            <SmallButton aria-label="Spara"><Icon name="saveDark" size={17} /></SmallButton>
            <SmallButton aria-label="Nytt fönster"><Icon name="newWin" size={18} /></SmallButton>
            <SmallButton aria-label="Anpassa">
              <Svg viewBox="0 0 10 10" $size={10} aria-hidden="true">
                <path d="M1 1h8v1.500H1zM1 4.500h8L5 9z" fill="#555" />
              </Svg>
            </SmallButton>
          </QuickAccess>
          <AppTitle>9999. Visma Demo -&nbsp; Visma Business</AppTitle>
          <WindowButtons>
            <WindowButton aria-label="Minimera">
              <Svg viewBox="0 0 12 12" $size={12}><path d="M1 7.500h10" stroke="#b5b5b5" strokeWidth="1.500" /></Svg>
            </WindowButton>
            <WindowButton aria-label="Återställ">
              <Svg viewBox="0 0 12 12" $size={12}>
                <path d="M1.500 5h6.500v6H1.500zM4 5V1.500h7V8H8" fill="none" stroke="#bdbdbd" strokeWidth="1.300" />
              </Svg>
            </WindowButton>
            <WindowButton aria-label="Stäng">
              <Svg viewBox="0 0 12 12" $size={12}><path d="M1 1l10 10M11 1L1 11" stroke="#b5b5b5" strokeWidth="2" /></Svg>
            </WindowButton>
          </WindowButtons>
        </TitleBar>

        <RibbonTabs>
          <RibbonTab $kind="file">Arkiv</RibbonTab>
          <RibbonTab $kind="active">Hem</RibbonTab>
          {ribbonTabs.map((name) => (
            <RibbonTab key={name}>{name}</RibbonTab>
          ))}
          <RibbonTools>
            <SmallButton aria-label="Fäll ihop"><Chevron dir="up" color="#808080" /></SmallButton>
            <SmallButton aria-label="Hjälp"><HelpMark>?</HelpMark></SmallButton>
          </RibbonTools>
        </RibbonTabs>
        <RibbonGroups />

        <FilterBar>
          <FilterLabel htmlFor="filter">Produktnr</FilterLabel>
          <FilterInput id="filter" defaultValue="143" />
          <FilterClose aria-label="Stäng">
            <Svg viewBox="0 0 12 12" $size={12}><path d="M1.500 1.500l9 9M10.500 1.500l-9 9" stroke="#606060" strokeWidth="2" /></Svg>
          </FilterClose>
        </FilterBar>

        <WorkArea>
          <Sheet>
            <Banner>Produktregister</Banner>
            <Overview>
              <DataTable>
                <Columns widths={[13, 153, 284, 91, 109, 260]} />
                <thead>
                  <tr>
                    <th aria-label="Markör" />
                    <th scope="col"><KeyName>Produktnr</KeyName></th>
                    <th scope="col">Benämning</th>
                    <th scope="col">Produkttyp 1</th>
                    <th scope="col">EAN produktnr</th>
                    <th scope="col">Moms- och bokf.grupp</th>
                  </tr>
                </thead>
                <tbody>
                  {products.map(([nr, name]) => (
                    <tr key={nr} aria-selected={nr === "143"}>
                      <td />
                      <td>{nr}</td>
                      <td>{name}</td>
                      <td>2 [Reservdelar]</td>
                      <td />
                      <td>11 [Lagerförd produkt 25%]</td>
                    </tr>
                  ))}
                </tbody>
              </DataTable>
              <Actions>
                <ActionButton>Behandlingssätt</ActionButton>
                <ActionButton $primary><KeyName>N</KeyName>y produkt</ActionButton>
              </Actions>
            </Overview>

            <Tabs names={mainTabs} gap={5} label="Produkt" />
            <Tabs names={subTabs} gap={13} label="Produktinformation" />

            <Panels>
              <LeftPanel>
                <FormHeading>Basinformation</FormHeading>
                <Form>
                  {fields.map(([name, value], i) => (
                    <Field key={name}>
                      <label htmlFor={`field-${i}`}>{i === 0 ? <KeyName>{name}</KeyName> : name}</label>
                      <FieldInput id={`field-${i}`} defaultValue={value} dir={name === "Normalt lager" ? "rtl" : "ltr"} />
                    </Field>
                  ))}
                </Form>
                <NoteLabel htmlFor="note">Anteckning</NoteLabel>
                <Note id="note" />
              </LeftPanel>
              <RightPanel>
                <MatrixHeading>Pris- och rabattmatris</MatrixHeading>
                <DataTable $framed>
                  <Columns widths={[13, 109, 110, 103, 84, 72, 91, 90, 102]} />
                  <thead>
                    <tr>
                      <th aria-label="Markör" />
                      {priceColumns.map((name) => (
                        <th key={name} scope="col">{name}</th>
                      ))}
                    </tr>
                  </thead>
                  <tbody>
                    {priceRows.map((row, i) => (
                      <tr key={i} aria-selected={i === 0}>
                        <td />
                        {row.map((value, j) => (
                          <td key={j}>{value}</td>
                        ))}
                      </tr>
                    ))}
                  </tbody>
                </DataTable>
              </RightPanel>
            </Panels>
          </Sheet>
          <VScroll>
            <SmallButton aria-label="Rulla upp"><Chevron dir="up" /></SmallButton>
            <Space $grow={266} />
            <Thumb $grow={56} />
            <Space $grow={485} />
            <SmallButton aria-label="Rulla ner"><Chevron dir="down" /></SmallButton>
          </VScroll>
        </WorkArea>
        <HScroll>
          <SmallButton aria-label="Rulla vänster"><Chevron dir="left" color="#b0b0b0" /></SmallButton>
          <SmallButton aria-label="Rulla höger"><Chevron dir="right" color="#b0b0b0" /></SmallButton>
        </HScroll>

        <Documents>
          {documents.map((name) => (
            <DocumentTab key={name} $active={name.startsWith("0640")}>{name}</DocumentTab>
          ))}
          <MoreDocuments aria-label="Fler dokument"><Triangle $size={4} /></MoreDocuments>
        </Documents>
        <StatusBar>Medd.</StatusBar>
      </Window>
    </>
  );
}
